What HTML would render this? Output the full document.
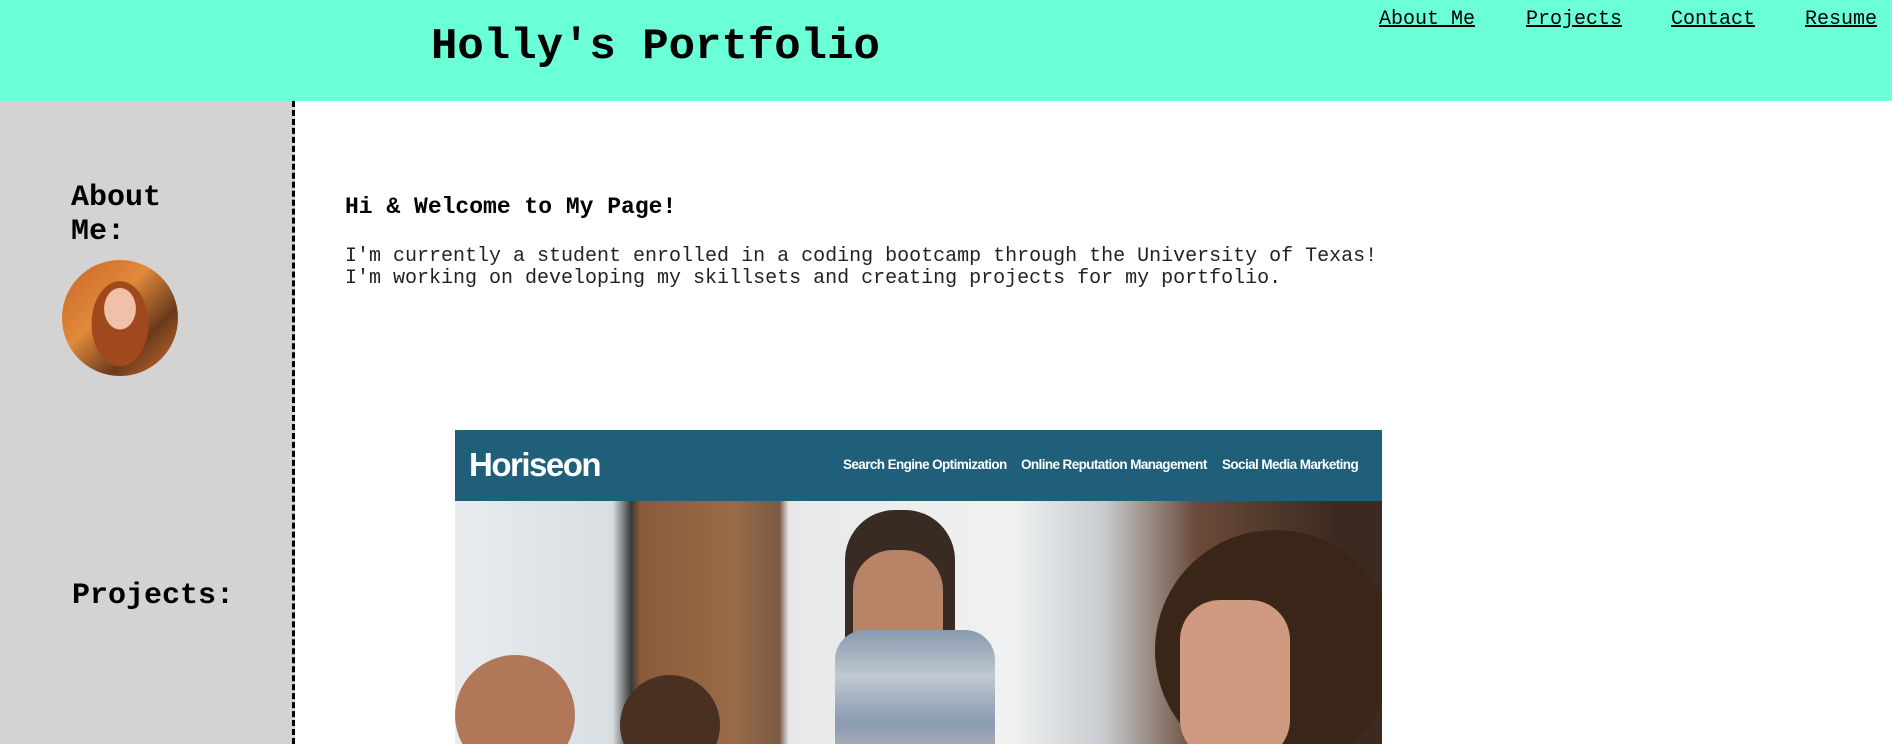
<!DOCTYPE html>
<html><head><meta charset="utf-8"><style>
*{margin:0;padding:0;box-sizing:border-box}
body{width:1892px;height:744px;overflow:hidden;background:#fff;font-family:"Liberation Mono","Courier New",monospace;position:relative}
header{position:absolute;left:0;top:0;width:1892px;height:101px;background:#6affd7}
h1{position:absolute;left:431px;top:22px;font-size:44px;font-weight:bold;line-height:50px;white-space:nowrap}
nav a{position:absolute;top:8px;font-size:20px;color:#000;text-decoration:underline;line-height:24px}
aside{position:absolute;left:0;top:101px;width:295px;height:643px;background:#d3d3d3;border-right:3px dashed #000}
.sh{position:absolute;font-size:30px;font-weight:bold;line-height:34px}
.av{position:absolute;left:62px;top:159px;width:116px;height:116px;border-radius:50%;overflow:hidden;
background:radial-gradient(ellipse 26px 34px at 50% 42%,#f0c0a8 60%,transparent 62%),
radial-gradient(ellipse 40px 60px at 50% 55%,#a0481e 70%,transparent 72%),
linear-gradient(135deg,#c8652a,#e08a3a 40%,#6a3a1c 70%,#d07030)}
h2{position:absolute;left:345px;top:193px;font-size:23px;font-weight:bold;line-height:28px;white-space:nowrap}
p{position:absolute;left:345px;top:246px;font-size:20px;line-height:22px;white-space:pre;color:#222}
.shot{position:absolute;left:455px;top:430px;width:927px;height:314px;overflow:hidden;
background:linear-gradient(90deg,#e8ecef 0,#d9dee2 17%,#3a3a3a 19%,#8a5a3a 20%,#9a6a48 30%,#7a5a44 35%,#e6e8ea 36%,#f0f2f2 60%,#c8ccd0 70%,#6a4a38 80%,#3c2a20 95%)}
.bar{position:absolute;left:0;top:0;width:927px;height:71px;background:#1f5f7a;color:#fff;font-family:"Liberation Sans",sans-serif}
.logo{position:absolute;left:14px;top:16px;font-size:33px;font-weight:bold;letter-spacing:-1.5px}
.bl{position:absolute;top:27px;font-size:13.5px;font-weight:bold;letter-spacing:-0.6px;white-space:nowrap}
</style></head><body>
<header><h1>Holly's Portfolio</h1>
<nav><a style="left:1379px">About Me</a><a style="left:1526px">Projects</a><a style="left:1671px">Contact</a><a style="left:1805px">Resume</a></nav></header>
<aside><div class="sh" style="left:71px;top:80px">About<br>Me:</div><div class="av"></div><div class="sh" style="left:72px;top:478px">Projects:</div></aside>
<h2>Hi &amp; Welcome to My Page!</h2>
<p>I'm currently a student enrolled in a coding bootcamp through the University of Texas!
I'm working on developing my skillsets and creating projects for my portfolio.</p>
<div class="shot">
<div style="position:absolute;left:390px;top:80px;width:110px;height:240px;background:#3a2a24;border-radius:50px 50px 0 0"></div>
<div style="position:absolute;left:398px;top:120px;width:90px;height:120px;background:#b88468;border-radius:40px"></div>
<div style="position:absolute;left:380px;top:200px;width:160px;height:140px;background:linear-gradient(#8a9ab0,#c0c8d0,#8a9ab0,#c8c0c0);border-radius:30px 30px 0 0"></div>
<div style="position:absolute;left:700px;top:100px;width:240px;height:240px;background:#3a2618;border-radius:50%"></div>
<div style="position:absolute;left:725px;top:170px;width:110px;height:160px;background:#d09a80;border-radius:40px"></div>
<div style="position:absolute;left:0;top:225px;width:120px;height:120px;background:#b07858;border-radius:50%"></div>
<div style="position:absolute;left:165px;top:245px;width:100px;height:100px;background:#4a3020;border-radius:50%"></div>
<div class="bar"><span class="logo">Horiseon</span>
<span class="bl" style="left:388px">Search Engine Optimization</span>
<span class="bl" style="left:566px">Online Reputation Management</span>
<span class="bl" style="left:767px">Social Media Marketing</span></div>
</div>
</body></html>
